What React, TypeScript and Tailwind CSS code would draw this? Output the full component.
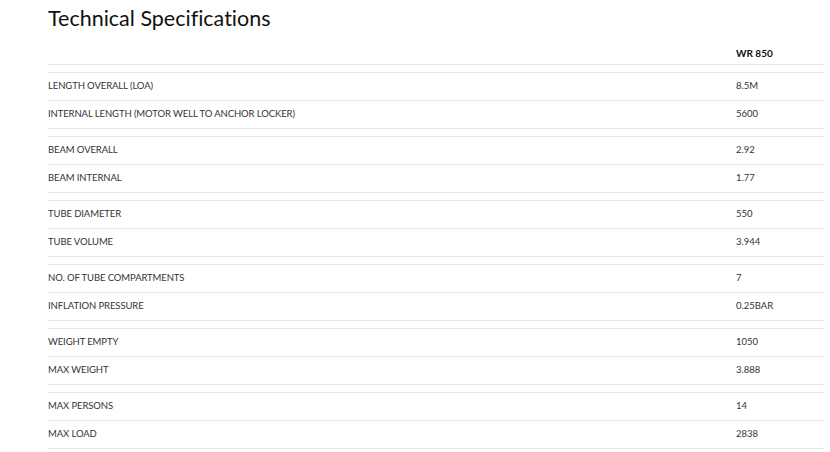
import React from "react";

const groups: [string, string][][] = [
  [
    ["LENGTH OVERALL (LOA)", "8.5M"],
    ["INTERNAL LENGTH (MOTOR WELL TO ANCHOR LOCKER)", "5600"],
  ],
  [
    ["BEAM OVERALL", "2.92"],
    ["BEAM INTERNAL", "1.77"],
  ],
  [
    ["TUBE DIAMETER", "550"],
    ["TUBE VOLUME", "3.944"],
  ],
  [
    ["NO. OF TUBE COMPARTMENTS", "7"],
    ["INFLATION PRESSURE", "0.25BAR"],
  ],
  [
    ["WEIGHT EMPTY", "1050"],
    ["MAX WEIGHT", "3.888"],
  ],
  [
    ["MAX PERSONS", "14"],
    ["MAX LOAD", "2838"],
  ],
];

const App: React.FC = () => {
  return (
    <div className="w-[830px] h-[452px] overflow-hidden bg-white pl-[48px] pr-[6px] text-[#222] font-['Lato',sans-serif] [font-variant-ligatures:none]">
      <h2 className="pt-[5px] h-[42px] text-[21.5px] leading-[26px] font-normal text-[#111]">
        Technical Specifications
      </h2>

      <div className="grid grid-cols-[688px_1fr] h-[23px] items-center border-b border-[#e6e6e6]">
        <div />
        <div className="text-[10px] font-bold text-[#111]">WR 850</div>
      </div>

      {groups.map((group, i) => (
        <div key={i} className="mt-[7px] border-t border-[#e6e6e6]">
          {group.map(([label, value]) => (
            <div
              key={label}
              className="grid grid-cols-[688px_1fr] h-[28px] items-center border-b border-[#e6e6e6] text-[9.5px] text-[#333]"
            >
              <div className="tracking-[-0.1px]">{label}</div>
              <div>{value}</div>
            </div>
          ))}
        </div>
      ))}
    </div>
  );
};

export default App;
